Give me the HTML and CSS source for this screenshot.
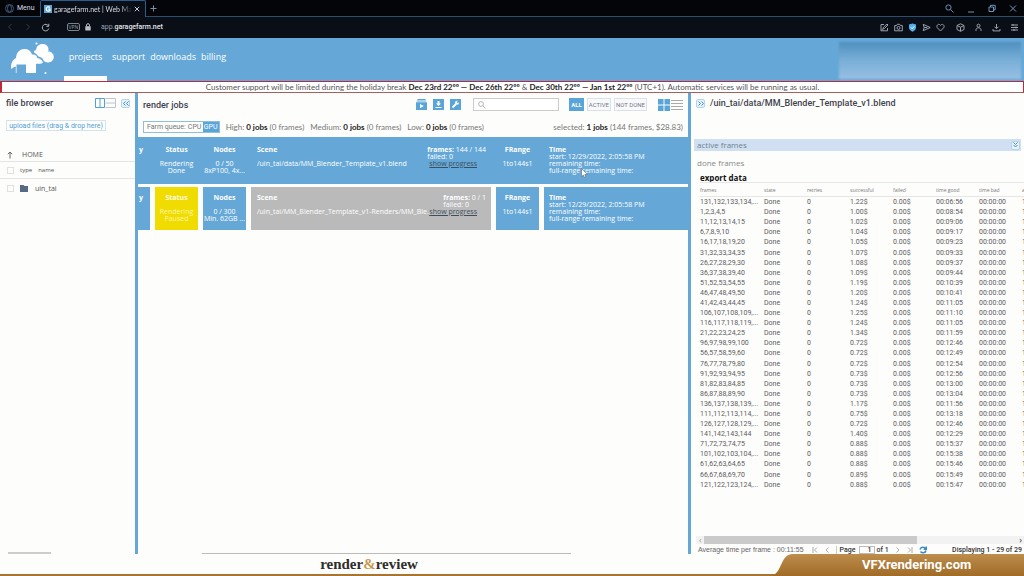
FILE: index.html
```html
<!DOCTYPE html>
<html lang="en">
<head>
<meta charset="utf-8">
<title>garagefarm.net | Web Manager</title>
<link rel="stylesheet" href="styles.css">
</head>
<body>
<div class="tabbar">
  <button class="menu-btn"><svg width="9" height="9" viewBox="0 0 9 9" fill="none" stroke="#3d5878"><circle cx="4.5" cy="4.5" r="4"/><ellipse cx="4.5" cy="4.5" rx="2" ry="3.5"/></svg>Menu</button>
  <div class="tab">
    <svg width="8" height="8" viewBox="0 0 8 8"><rect width="8" height="8" fill="#5fa5d6"/><path d="M5.8 2.5C4.700 1.400 2.200 1.700 2.200 4S4.700 6.600 5.900 5.500V4.200H4.300" fill="none" stroke="#fff" stroke-width="1.200"/></svg>
    <span class="tab-title">garagefarm.net | Web Man</span>
    <button class="plain" aria-label="Close tab"><svg width="6" height="6" viewBox="0 0 6 6" stroke="#c4ccd6" fill="none"><path d="M.8.8l4.400 4.400M5.200.8L.8 5.200"/></svg></button>
  </div>
  <button class="plain new-tab" aria-label="New tab"><svg width="7" height="7" viewBox="0 0 7 7" stroke="#7d93ad" fill="none"><path d="M3.500.5v6M.5 3.500h6"/></svg></button>
  <div class="window-buttons">
    <button class="plain" aria-label="Search"><svg width="9" height="9" viewBox="0 0 9 9" stroke="#6e94b8" fill="none"><circle cx="3.500" cy="3.500" r="2.600"/><path d="M5.500 5.500l3 3"/></svg></button>
    <button class="plain" aria-label="Minimize"><svg width="8" height="9" viewBox="0 0 8 9" stroke="#6e94b8"><path d="M1 8h6"/></svg></button>
    <button class="plain" aria-label="Restore"><svg width="8" height="9" viewBox="0 0 8 9" stroke="#6e94b8" fill="none"><path d="M1 3h4.500v4.500H1zM2.500 3V1.300h4.700v4.500H5.500"/></svg></button>
    <button class="plain" aria-label="Close"><svg width="8" height="9" viewBox="0 0 8 9" stroke="#6e94b8" fill="none"><path d="M1 1.500l6 6M7 1.500l-6 6"/></svg></button>
  </div>
</div>

<div class="addressbar">
  <button class="plain" aria-label="Back"><svg width="6" height="8" viewBox="0 0 6 8" stroke="#343b46" fill="none"><path d="M4.500 1L1.500 4l3 3"/></svg></button>
  <button class="plain" aria-label="Forward"><svg width="6" height="8" viewBox="0 0 6 8" stroke="#343b46" fill="none"><path d="M1.500 1l3 3-3 3"/></svg></button>
  <button class="plain" aria-label="Reload"><svg width="9" height="9" viewBox="0 0 9 9" stroke="#a9b0ba" fill="none"><path d="M7.500 3A3.300 3.300 0 1 0 7.800 5.500M7.800.8v2.500H5.300"/></svg></button>
  <span class="vpn">VPN</span>
  <svg class="lock" width="6" height="8" viewBox="0 0 6 8"><rect y="3.200" x=".3" width="5.400" height="4.300" fill="#b9bec6"/><path d="M1.500 3.500V2.200a1.500 1.500 0 0 1 3 0v1.300" stroke="#b9bec6" fill="none"/></svg>
  <span class="url">app.<b>garagefarm.net</b></span>
  <div class="tools">
    <svg viewBox="0 0 9 9"><path d="M4 1.500H1v6.300h6.500V5M3 6l.3-1.500L7 1l1 1-3.600 3.600zM1 7.800l2-2"/></svg>
    <svg viewBox="0 0 9 9"><path d="M.7 2.500h1.800l.8-1.200h2.400l.8 1.200h1.800v5.300H.7z"/><circle cx="4.500" cy="4.900" r="1.500"/></svg>
    <svg viewBox="0 0 9 9"><path d="M4.500.5L8 1.500v3c0 2-1.500 3.400-3.500 4.200C2.500 7.900 1 6.500 1 4.500v-3z" fill="#53aeea" stroke="none"/><path d="M2.900 4.300l1.300 1.400L6.300 3.300" stroke="#fff"/></svg>
    <svg viewBox="0 0 9 9"><path d="M1.200 1.300l7 3.200-7 3.200 1-3.200zM2.200 4.500h3"/></svg>
    <svg viewBox="0 0 9 9"><path d="M4.500 8L1.300 4.700C-.3 2.700 2.700-.2 4.500 2.400 6.300-.2 9.300 2.700 7.700 4.700z"/></svg>
    <svg class="gap" viewBox="0 0 9 9"><path d="M4.500.8L8 2.500v4L4.500 8.300 1 6.500v-4zM1 2.500l3.500 1.700L8 2.500M4.500 4.200v4"/></svg>
    <svg class="gap" viewBox="0 0 9 9"><circle cx="4.500" cy="2.700" r="1.500"/><path d="M2 8V6.500c0-2.200 5-2.200 5 0V8"/></svg>
    <svg class="gap" viewBox="0 0 9 9"><path d="M4.500 1v4.500M2.500 3.700l2 2 2-2M1 6v1.900h7V6"/></svg>
    <svg class="gap" viewBox="0 0 9 9"><path d="M1 2h7M1 4.500h7M1 7h7M3 1v2M6 3.500v2M4 6v2"/></svg>
  </div>
</div>

<header class="site-header">
  <svg class="logo" width="44" height="32" viewBox="0 0 44 32" fill="#fff">
    <path d="M0 27c-.5-5 1.500-9.500 5-11C5.500 10 9 7 13.500 7c4 0 6.500 2 7.500 5.500 3-.5 4.800 1 5.300 3.500 2.700.5 4.700 2 5.700 4.500-1 1-2 1.500-7 1.200V31H15v-8.500H5.500V31H4.800V24.500C2.500 25 2 26 0 27z"/>
    <path d="M23.300 8.500c1.500 0 2-.5 2-2C26 3.500 28.500 2 31.300 2c3.700 0 6.200 2 6.200 5.500 0 1 0 1.500-.5 2 3 0 5.800 2 5.800 5.300s-2.300 5.700-5.500 5.700c-3.300 0-4.800-1.500-5.800-4-1.500-1.500-4-1.500-5.500-3.500-1-1.500-1.700-2-3-2.500z"/>
    <circle cx="25.500" cy="1.500" r="1.100"/><circle cx="34.500" cy="31" r="1"/>
  </svg>
  <nav class="nav">
    <a class="active" href="#">projects</a><a href="#">support</a><a href="#">downloads</a><a href="#">billing</a>
  </nav>
  <div class="account"></div>
</header>

<p class="notice">Customer support will be limited during the holiday break <b>Dec 23rd 22ºº — Dec 26th 22ºº</b> &amp; <b>Dec 30th 22ºº — Jan 1st 22ºº</b> (UTC+1). Automatic services will be running as usual.</p>

<main class="workspace">
  <aside class="files">
    <div class="files-head">
      <h2>file browser</h2>
      <button class="plain" aria-label="Layout"><svg width="21" height="10" viewBox="0 0 21 10" fill="none"><path d="M.5.5h9v9h-9zM5 .5v9" stroke="#549fd4"/><path d="M10.500 .5h10v9h-10M10.500 5h10" stroke="#bcc4cc"/></svg></button>
      <button class="collapse" aria-label="Collapse"><svg width="6" height="5" viewBox="0 0 6 5" fill="none" stroke="#3f8fc8"><path d="M2.500.5l-2 2 2 2M5.500.5l-2 2 2 2"/></svg></button>
    </div>
    <button class="upload">upload files (drag &amp; drop here)</button>
    <div class="file-row home"><svg width="6" height="8" viewBox="0 0 6 8" fill="none" stroke="#666"><path d="M3 7.500V1M.8 3.200L3 1l2.200 2.200"/></svg><span>HOME</span></div>
    <div class="file-row cols"><input type="checkbox" aria-label="Select all"><span>type</span><span>name</span></div>
    <div class="file-row item"><input type="checkbox" aria-label="Select uin_tai"><svg width="8" height="7" viewBox="0 0 8 7"><path d="M0 0h3.500l1 1H8v6H0z" fill="#566a83"/></svg><span>uin_tai</span></div>
    <div class="files-scroll"></div>
  </aside>

  <section class="jobs">
    <div class="jobs-head">
      <h2>render jobs</h2>
      <div class="actions">
        <button class="plain" aria-label="Start"><svg width="11" height="11" viewBox="0 0 11 11"><path d="M1.500 0h8v1h-8zM.8 1.600h9.400v1H.8zM0 3.200h11V11H0z" fill="#59a5d8"/><path d="M4 5l3.800 2L4 9.200z" fill="#fff"/></svg></button>
        <button class="plain" aria-label="Download"><svg width="11" height="11" viewBox="0 0 11 11"><path d="M0 0h11v11H0z" fill="#59a5d8"/><path d="M4.500 2h2v2.500H8L5.500 7 3 4.500h1.500zM2.500 8h6v1h-6z" fill="#fff"/></svg></button>
        <button class="plain" aria-label="Settings"><svg width="11" height="11" viewBox="0 0 11 11"><path d="M0 0h11v11H0z" fill="#59a5d8"/><path d="M2.500 8.500l3.500-3.500" stroke="#fff" stroke-width="1.800"/><path d="M7.500 1.800L6.800 4l2.200-.5a2 2 0 1 1-1.500-1.700z" fill="#fff"/></svg></button>
      </div>
      <label class="search"><svg width="8" height="8" viewBox="0 0 8 8" fill="none" stroke="#b5b5b5"><circle cx="3" cy="3" r="2.400"/><path d="M4.800 4.800L7.500 7.500"/></svg><input type="text" aria-label="Search jobs"></label>
      <div class="filters"><button class="on">ALL</button><button>ACTIVE</button><button>NOT DONE</button></div>
      <button class="plain view" aria-label="View"><svg width="25" height="12" viewBox="0 0 25 12"><path d="M0 0h5.500v5.500H0zM6.500 0H12v5.500H6.500zM0 6.500h5.500V12H0zM6.500 6.500H12V12H6.500z" fill="#59a5d8"/><path d="M13 1h12v1H13zM13 4h12v1H13zM13 7h12v1H13zM13 10h12v1H13z" fill="#aaa"/></svg></button>
    </div>
    <div class="queue">
      <div class="farm"><span>Farm queue:</span><button>CPU</button><button class="on">GPU</button></div>
      <span>High: <b>0 jobs</b> (0 frames)</span><span>Medium: <b>0 jobs</b> (0 frames)</span><span>Low: <b>0 jobs</b> (0 frames)</span>
      <span class="selected">selected: <b>1 jobs</b> (144 frames, $28.83)</span>
    </div>
    <div class="job chosen">
      <div class="cell first"><b>y</b></div>
      <div class="cell mid"><b>Status</b><p>Rendering<br>Done</p></div>
      <div class="cell mid"><b>Nodes</b><p>0 / 50<br>8xP100, 4x...</p></div>
      <div class="cell scene"><div><b>Scene</b><p>/uin_tai/data/MM_Blender_Template_v1.blend</p></div><div class="count"><div><span><b>frames:</b> 144 / 144</span><span>failed: 0</span></div><a href="#">show progress</a></div></div>
      <div class="cell mid"><b>FRange</b><p>1to144s1</p></div>
      <div class="cell time"><b>Time</b><span>start: 12/29/2022, 2:05:58 PM</span><span>remaining time:</span><span>full-range remaining time:</span>
        <svg class="pointer" width="7" height="10" viewBox="0 0 7 10"><path d="M.5.500v8l2-1.500 1 2.500 1.300-.6-1-2.400H6.500z" fill="#fff" stroke="#555" stroke-width=".5"/></svg></div>
    </div>
    <div class="job">
      <div class="cell first"><b>y</b></div>
      <div class="cell mid paused"><b>Status</b><p>Rendering<br>Paused</p></div>
      <div class="cell mid"><b>Nodes</b><p>0 / 300<br>Min. 62GB ...</p></div>
      <div class="cell scene idle"><div class="path"><b>Scene</b><p>/uin_tai/MM_Blender_Template_v1-Renders/MM_Ble...</p></div><div class="count"><div><span><b>frames:</b> 0 / 1</span><span>failed: 0</span></div><a href="#">show progress</a></div></div>
      <div class="cell mid"><b>FRange</b><p>1to144s1</p></div>
      <div class="cell time"><b>Time</b><span>start: 12/29/2022, 2:05:58 PM</span><span>remaining time:</span><span>full-range remaining time:</span></div>
    </div>
    <div class="jobs-scroll"></div>
  </section>

  <section class="details">
    <div class="details-head"><button class="collapse" aria-label="Expand"><svg width="6" height="5" viewBox="0 0 6 5" fill="none" stroke="#3f8fc8"><path d="M.5.5l2 2-2 2M3.500.5l2 2-2 2"/></svg></button><h2>/uin_tai/data/MM_Blender_Template_v1.blend</h2></div>
    <div class="active-frames"><span>active frames</span><button class="collapse" aria-label="Show active frames"><svg width="5" height="6" viewBox="0 0 5 6" fill="none" stroke="#3f8fc8"><path d="M.5.5l2 2 2-2M.5 3l2 2 2-2"/></svg></button></div>
    <div class="done-frames">done frames</div>
    <button class="export">export data</button>
    <div class="table-wrap">
      <table class="frames">
        <thead><tr><th class="wide">frames</th><th>state</th><th>retries</th><th>successful</th><th>failed</th><th>time good</th><th>time bad</th><th>av</th></tr></thead>
        <tbody id="rows"></tbody>
      </table>
    </div>
    <div class="hscroll"><span>‹</span><div class="track"><div class="thumb"></div></div><span class="dark">›</span></div>
    <div class="pager">
      <span class="avg">Average time per frame : 00:11:55</span>
      <svg width="6" height="6" viewBox="0 0 6 6" fill="none" stroke="#aaa"><path d="M1 0v6M5 .5L2.500 3 5 5.500"/></svg>
      <svg width="6" height="6" viewBox="0 0 6 6" fill="none" stroke="#aaa"><path d="M4.500.5L2 3l2.500 2.500"/></svg>
      <label class="page">Page <input type="text" value="1"></label><span class="strong">of 1</span>
      <svg width="6" height="6" viewBox="0 0 6 6" fill="none" stroke="#aaa"><path d="M1.500.5L4 3 1.500 5.500"/></svg>
      <svg width="6" height="6" viewBox="0 0 6 6" fill="none" stroke="#aaa"><path d="M5 0v6M1 .5L3.500 3 1 5.500"/></svg>
      <svg width="8" height="8" viewBox="0 0 8 8" fill="none" stroke="#3b8ccb" stroke-width="1.500"><path d="M1 3.500C1.500 1 5 .5 6.500 2.500M7.300.5v2.700H4.700M7 4.500C6.500 7 3 7.500 1.500 5.500"/></svg>
      <span class="strong shown">Displaying 1 - 29 of 29</span>
    </div>
  </section>
</main>

<footer class="banner">
  <div class="brand">render<em>&amp;</em>review</div>
  <div class="ribbon">
    <svg width="28" height="22" viewBox="0 0 28 22" preserveAspectRatio="none"><defs><linearGradient id="gold" x2="0" y2="1"><stop stop-color="#bd8d4c"/><stop offset="1" stop-color="#a06b27"/></linearGradient></defs><path d="M0 22C14 22 10 0 24 0h4v22z" fill="url(#gold)"/></svg>
    <a href="#">VFXrendering.com</a>
  </div>
</footer>
<script src="rows.js"></script>
</body>
</html>
```

FILE: styles.css
```css
* { box-sizing: border-box; }
body {
  margin: 0;
  height: 100vh;
  display: flex;
  flex-direction: column;
  overflow: hidden;
  font: 7px/8px "Open Sans", sans-serif;
  color: #555;
  background: #fdfdfc;
}
button, input { font: inherit; color: inherit; margin: 0; padding: 0; border: 0; background: none; }
svg { display: block; flex: none; }
h2, p { margin: 0; }
h2 { font: 500 9px/12px Roboto, sans-serif; color: #3f434d; }
a { color: inherit; }

.tabbar {
  flex: none;
  display: flex;
  align-items: center;
  height: 17px;
  padding: 0 7px 0 5px;
  background: #030509;
  border-bottom: 1px solid #2d4d6e;
  color: #d8dde4;
}
.menu-btn { display: flex; align-items: center; gap: 3px; width: 35px; white-space: nowrap; font-family: Roboto, sans-serif; }
.tab {
  display: flex;
  align-items: center;
  gap: 2px;
  width: 106px;
  height: 17px;
  padding: 0 5px 0 3px;
  background: #0a0e17;
  border: 1px solid #2d5d8c;
  border-bottom: 0;
  border-radius: 2px 2px 0 0;
}
.tab-title {
  flex: 1;
  overflow: hidden;
  white-space: nowrap;
  font-family: Lato, sans-serif;
  -webkit-mask-image: linear-gradient(90deg, #000 85%, transparent);
  mask-image: linear-gradient(90deg, #000 85%, transparent);
}
.new-tab { margin-left: 4px; }
.window-buttons { display: flex; gap: 13px; margin-left: auto; }

.addressbar {
  flex: none;
  display: flex;
  align-items: center;
  height: 21px;
  padding: 0 5px 1px 7px;
  background: #0a0e17;
  color: #9ba2ad;
}
.addressbar button { margin-right: 12px; }
.addressbar button:nth-child(3) { margin-right: 10px; margin-left: -2px; }
.vpn { border: 1px solid #7a828e; border-radius: 2px; width: 13px; font-size: 5px; line-height: 6px; text-align: center; margin-left: 7px; }
.lock { margin: 0 10px 0 5px; }
.url { font-family: Roboto, sans-serif; }
.url b { color: #e4e7eb; font-weight: 500; }
.tools { display: flex; gap: 5px; margin-left: auto; }
.tools svg { width: 9px; height: 9px; fill: none; stroke: #9aa1ab; }
.tools .gap { margin-left: 6px; }
.tools .gap ~ .gap { margin-left: 4px; }

.site-header { flex: none; display: flex; height: 43px; padding-left: 11px; background: #65a8d7; color: #fff; }
.logo { margin-top: 4px; }
.nav { display: flex; gap: 5px; margin-left: 9px; font-size: 9px; line-height: 38px; }
.nav a { text-decoration: none; }
.nav .active { width: 43px; text-align: center; border-bottom: 5px solid #fff; }
.account {
  width: 18%;
  margin: 4px 3px 2px auto;
  background: linear-gradient(#4f8fbe, #79afd8 50%, #98bfe2);
  filter: blur(1px);
}

.notice {
  flex: none;
  height: 12px;
  line-height: 10px;
  border: 1px solid #bf2936;
  border-left-width: 2px;
  border-bottom-color: #a45f5f;
  background: #fff;
  text-align: center;
  white-space: nowrap;
  overflow: hidden;
}
.notice, .queue > span { font-family: Lato, sans-serif; font-size: 8px; }
.notice b, .queue b { color: #222; }

.workspace { flex: 1; min-height: 0; display: grid; grid-template-columns: 135px minmax(0, 1fr) 333px; overflow: hidden; }

.files { display: flex; flex-direction: column; min-width: 0; }
.files-head { display: flex; align-items: center; gap: 5px; height: 20px; padding: 0 5px 0 6px; }
.files-head h2 { flex: 1; }
.collapse {
  display: flex;
  align-items: center;
  justify-content: center;
  width: 9px;
  height: 9px;
  border: 1px solid #b5d3ea;
  border-radius: 2px;
  background: #e8f2fa;
}
.upload { width: 100px; height: 11px; margin: 7px 0 0 6px; border: 1px solid #d5e3ee; color: #549fd4; font-family: Roboto, sans-serif; white-space: nowrap; }
.file-row { display: flex; align-items: center; height: 17px; padding-left: 7px; border-bottom: 1px solid #e4e4e4; }
.file-row input { appearance: none; width: 7px; height: 7px; border: 1px solid #e0e0e0; }
.home { height: 20px; margin-top: 11px; padding-top: 6px; gap: 9px; }
.cols { gap: 6px; font-size: 6px; }
.item { border: 0; height: 19px; }
.item input { margin-right: 6px; }
.item span { margin-left: 7px; }
.files-scroll { width: 43px; height: 2px; margin: auto 0 0 8px; background: #ccc; }

.jobs { display: flex; flex-direction: column; min-width: 0; border: 3px solid #65a8d7; border-width: 0 3px; }
.jobs-head { display: flex; align-items: center; height: 23px; padding: 0 5px; }
.jobs-head h2 { flex: 1; }
.actions { display: flex; gap: 6px; }
.search { display: flex; align-items: center; width: 86px; height: 13px; margin-left: 12px; padding-left: 4px; border: 1px solid #ccc; background: #fff; }
.search input { flex: 1; min-width: 0; outline: 0; }
.filters { display: flex; gap: 3px; margin: 0 11px 0 10px; font: 6px/8px Roboto, sans-serif; }
.filters button { height: 13px; padding: 0 1px; border: 1px solid #d9e2ec; background: #f7f9fb; white-space: nowrap; color: #778; }
.filters .on { background: #59a5d8; border-color: #59a5d8; color: #fff; font-weight: 700; }
.queue { display: flex; align-items: center; gap: 6px; height: 21px; padding: 0 5px; color: #777; white-space: nowrap; }
.farm { display: flex; align-items: stretch; height: 12px; font: 7px/10px Roboto, sans-serif; border: 1px solid #8fbfe0; padding-left: 3px; }
.farm button { width: 16px; margin-left: 1px; }
.farm .on { background: #59a5d8; color: #fff; margin-left: 0; }
.selected { margin-left: auto; }

.job { display: flex; gap: 5px; color: #fff; line-height: 7px; margin-bottom: 5px; }
.cell { height: 43px; padding-top: 7px; background: #65a8d7; white-space: nowrap; }
.cell b, .cell span { display: block; }
.mid { width: 43px; text-align: center; overflow: hidden; }
.mid b, .scene > div > b { margin-bottom: 7px; }
.first { width: 12px; text-align: left; padding-left: 1px; }
.scene { flex: 1; min-width: 0; display: flex; justify-content: space-between; padding-left: 6px; padding-right: 5px; }
.path { min-width: 0; }
.count { flex: none; display: flex; flex-direction: column; align-items: flex-end; }
.count b { display: inline; }
.count a { display: block; margin-right: 9px; color: #3d4f5c; }
.time { position: relative; width: 144px; padding-left: 5px; }
.chosen { background: #65a8d7; padding: 2px 0; margin-bottom: 3px; }
.paused { background: #f0dc00; color: #fff6a0; }
.paused b { color: #fffbe0; }
.idle { background: #bababa; }
.pointer { position: absolute; left: 37px; top: 29px; }
.jobs-scroll { width: 67%; height: 1px; margin: auto 0 0 64px; background: #bbb; }

.details { display: flex; flex-direction: column; min-width: 0; overflow: hidden; padding-left: 5px; }
.details-head { display: flex; align-items: center; gap: 5px; height: 20px; }
.active-frames { display: flex; align-items: center; justify-content: space-between; height: 12px; margin: 26px 3px 0 -2px; padding: 0 1px 0 3px; background: #d0dff2; font-size: 8px; color: #6f7f90; }
.done-frames { height: 23px; padding-left: 1px; line-height: 23px; font-size: 8px; color: #888; }
.export { align-self: flex-start; height: 8px; padding-left: 4px; font-weight: 700; font-size: 8px; line-height: 8px; color: #111; }
.table-wrap { flex: 1; min-height: 0; overflow: hidden; padding-left: 4px; }
.frames { table-layout: fixed; width: 364px; height: 308px; border-collapse: collapse; color: #5c5c5c; }
.frames th { height: 14px; padding: 0; border: 1px solid #e6e6e6; border-width: 1px 0; width: 43px; text-align: left; font-size: 5px; font-weight: 400; color: #777; }
.frames .wide { width: 64px; }
.frames td { padding: 1px 0; font-family: Roboto, sans-serif; line-height: 8px; white-space: nowrap; }
.hscroll { flex: none; display: flex; align-items: center; height: 8px; padding: 0 2px 0 3px; line-height: 6px; font-size: 9px; color: #999; background: #f2f2f2; }
.hscroll .dark { color: #333; }
.track { flex: 1; margin: 0 2px; }
.thumb { width: 68%; height: 8px; background: #cacaca; }
.pager { flex: none; display: flex; align-items: center; gap: 6px; height: 8px; margin-top: 2px; padding: 0 2px; font: 7px/8px "Liberation Sans", sans-serif; white-space: nowrap; color: #666; }
.page { display: flex; gap: 3px; border-left: 1px solid #ccc; padding-left: 3px; }
.page input { width: 16px; height: 8px; border: 1px solid #bbb; text-align: right; padding-right: 2px; }
.page + .strong { margin-left: -4px; }
.strong, .page { color: #333; font-family: Roboto, sans-serif; font-weight: 500; }
.pager .avg { margin-right: 2px; }
.shown { margin-left: auto; }

.banner { flex: none; display: flex; height: 22px; background: #fdfdfc linear-gradient(#a9742f, #a9742f) bottom / 100% 2px no-repeat; }
.brand { flex: 1; padding-right: 31px; text-align: center; font: 700 15px/20px "Liberation Serif", serif; color: #2f2c2c; }
.brand em { font-style: normal; color: #c69a4b; }
.ribbon { display: flex; width: 255px; }
.ribbon a { flex: 1; padding-left: 65px; background: linear-gradient(#bd8d4c, #a06b27); color: #fff; text-decoration: none; font: 700 13px/22px Roboto, sans-serif; }
```

FILE: rows.js
```js
const rows = `131,132,133,134,...|1.22|06:56
1,2,3,4,5|1.00|08:54
11,12,13,14,15|1.02|09:06
6,7,8,9,10|1.04|09:17
16,17,18,19,20|1.05|09:23
31,32,33,34,35|1.07|09:33
26,27,28,29,30|1.08|09:37
36,37,38,39,40|1.09|09:44
51,52,53,54,55|1.19|10:39
46,47,48,49,50|1.20|10:41
41,42,43,44,45|1.24|11:05
106,107,108,109,...|1.25|11:10
116,117,118,119,...|1.24|11:05
21,22,23,24,25|1.34|11:59
96,97,98,99,100|0.72|12:46
56,57,58,59,60|0.72|12:49
76,77,78,79,80|0.72|12:54
91,92,93,94,95|0.73|12:56
81,82,83,84,85|0.73|13:00
86,87,88,89,90|0.73|13:04
136,137,138,139,...|1.17|11:56
111,112,113,114,...|0.75|13:18
126,127,128,129,...|0.72|12:46
141,142,143,144|1.40|12:29
71,72,73,74,75|0.88|15:37
101,102,103,104,...|0.88|15:38
61,62,63,64,65|0.88|15:46
66,67,68,69,70|0.89|15:49
121,122,123,124,...|0.88|15:47`.split("\n");

const body = document.getElementById("rows");
for (const row of rows) {
  const [frames, cost, time] = row.split("|");
  const tr = body.insertRow();
  for (const text of [frames, "Done", "0", cost + "$", "0.00$", "00:" + time, "00:00:00", "12"]) {
    tr.insertCell().textContent = text;
  }
}
```
